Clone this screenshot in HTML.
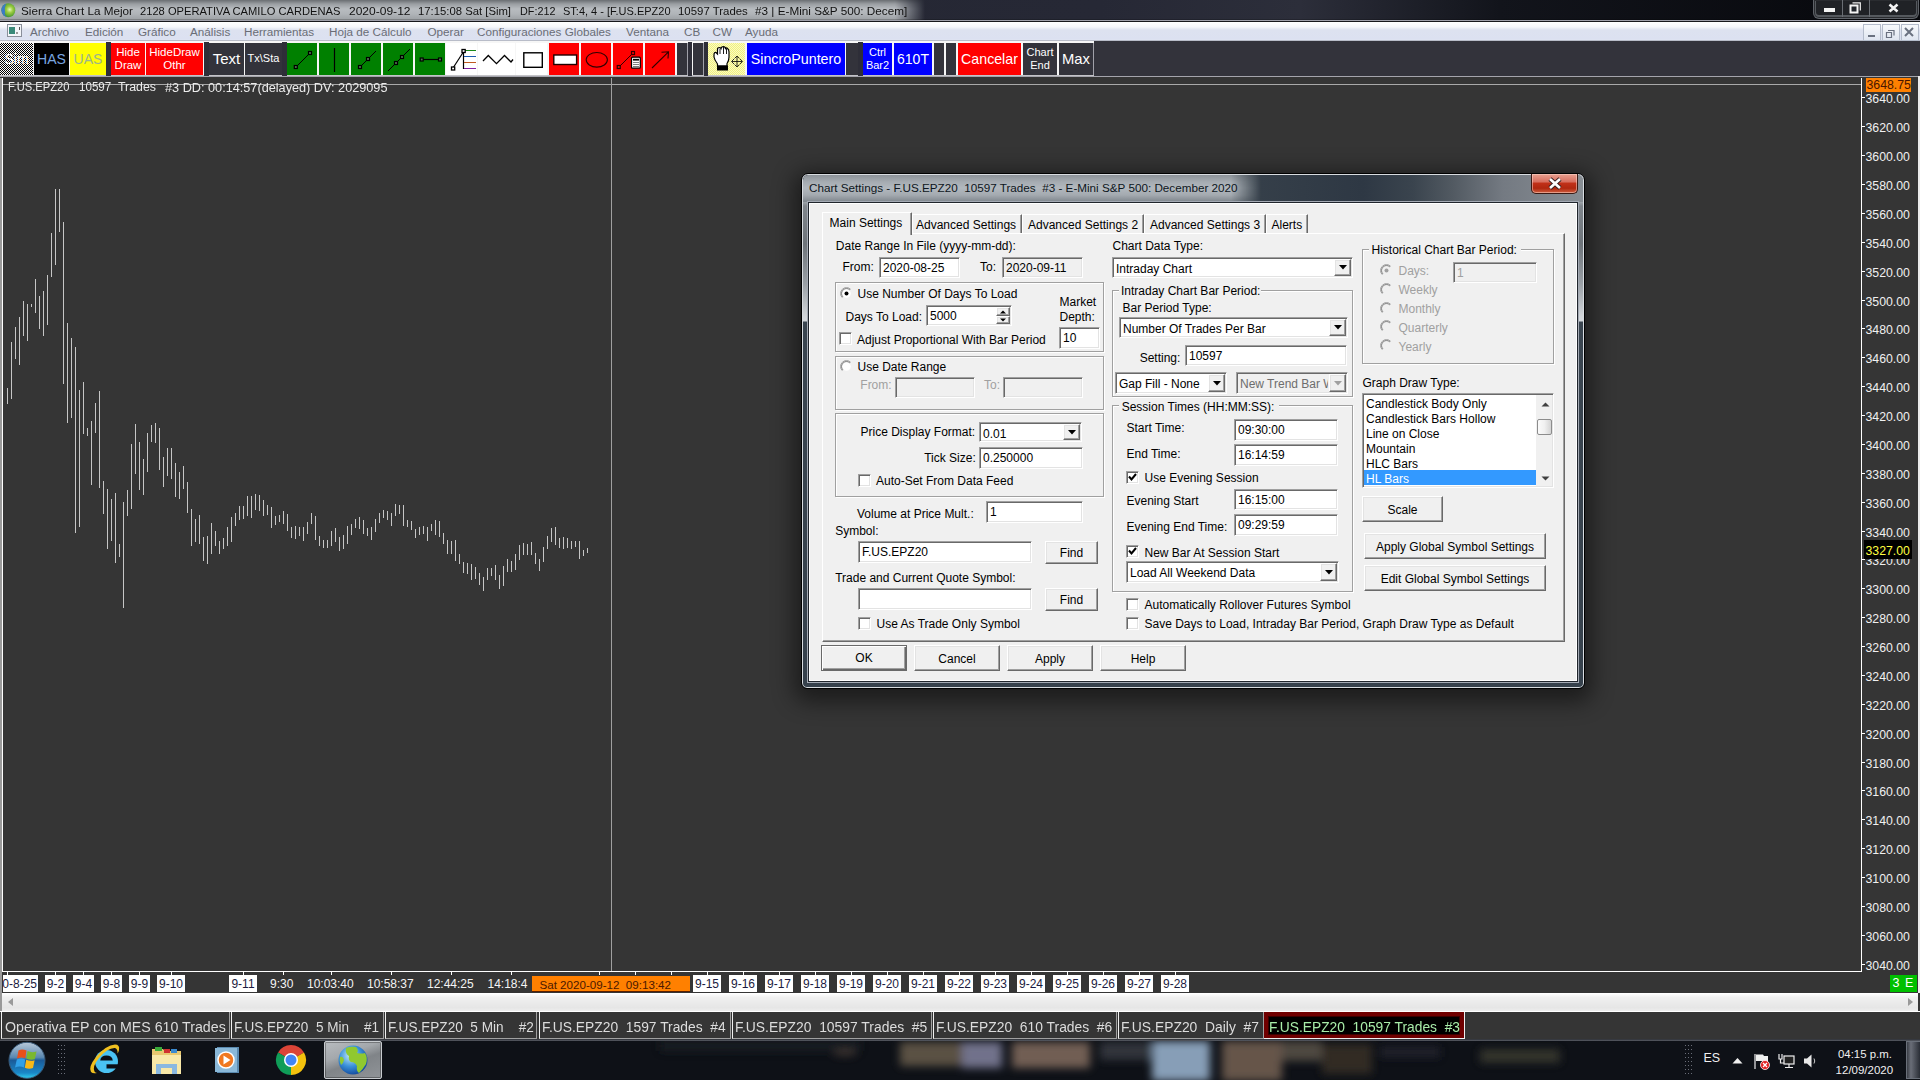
<!DOCTYPE html><html><head><meta charset="utf-8"><style>
*{margin:0;padding:0;box-sizing:border-box}
html,body{width:1920px;height:1080px;overflow:hidden;background:#353535;font-family:"Liberation Sans",sans-serif;font-size:12px}
.a{position:absolute;white-space:nowrap}
.t{line-height:1}
.btn{background:#f0f0f0;border:1px solid;border-color:#fff #696969 #696969 #fff;box-shadow:inset -1px -1px 0 #a0a0a0,inset 1px 1px 0 #e3e3e3;text-align:center;color:#000}
.ed{background:#fff;border:1px solid;border-color:#a0a0a0 #fff #fff #a0a0a0;box-shadow:inset 1px 1px 0 #696969,inset -1px -1px 0 #e3e3e3}
.grp{border:1px solid #a0a0a0;box-shadow:inset 1px 1px 0 #fff,1px 1px 0 #fff}
.tb{border:1px solid;border-color:#fff #a0a0a0 #a0a0a0 #fff;color:#fff;text-align:center;overflow:hidden}
</style></head><body>
<div class="a " style="left:0px;top:0px;width:1920px;height:21px;background:linear-gradient(90deg,#232530 0,#262835 1100px,#2c2e3a 1300px,#12141b 1500px,#06070b 1920px)"></div>
<div class="a " style="left:0px;top:0px;width:925px;height:20px;background:linear-gradient(#6a6e72 0,#9a9ea2 4px,#b8bcc0 9px,#b0b4b8 14px,#9ca0a4 20px);-webkit-mask-image:linear-gradient(90deg,#000 0,#000 895px,transparent 925px)"></div>
<div class="a " style="left:0px;top:19px;width:1920px;height:1px;background:rgba(0,0,0,0.2)"></div>
<div class="a " style="left:0px;top:20px;width:1920px;height:1px;background:#a0a0aa"></div>
<div class="a " style="left:0px;top:21px;width:1920px;height:1px;background:#18181c"></div>
<svg class="a" style="left:1px;top:3px" width="15" height="15" viewBox="0 0 15 15"><defs><radialGradient id="gl" cx="0.6" cy="0.45" r="0.65"><stop offset="0" stop-color="#e0f8c0"/><stop offset="0.35" stop-color="#9ccc40"/><stop offset="0.8" stop-color="#4a9a30"/><stop offset="1" stop-color="#2a70b8"/></radialGradient></defs><circle cx="7.3" cy="7.3" r="7" fill="url(#gl)"/><path d="M0.5 7 Q1 2 5 0.8 Q3 5 4 9 Q3 12 6 14.2 Q1 12.5 0.5 7Z" fill="#3a7ac8"/></svg>
<div class="a t" style="left:21px;top:5.3px;font-size:11.8px;line-height:13.6px;color:#111;transform-origin:0 0;transform:scaleX(0.9932);">Sierra Chart La Mejor</div>
<div class="a t" style="left:140px;top:5.3px;font-size:11.8px;line-height:13.6px;color:#111;transform-origin:0 0;transform:scaleX(0.9453);">2128 OPERATIVA CAMILO CARDENAS</div>
<div class="a t" style="left:349px;top:5.3px;font-size:11.8px;line-height:13.6px;color:#111;transform-origin:0 0;transform:scaleX(1.0192);">2020-09-12</div>
<div class="a t" style="left:418px;top:5.3px;font-size:11.8px;line-height:13.6px;color:#111;transform-origin:0 0;transform:scaleX(0.9582);">17:15:08 Sat [Sim]</div>
<div class="a t" style="left:519.5px;top:5.3px;font-size:11.8px;line-height:13.6px;color:#111;transform-origin:0 0;transform:scaleX(0.9177);">DF:212</div>
<div class="a t" style="left:562.5px;top:5.3px;font-size:11.8px;line-height:13.6px;color:#111;transform-origin:0 0;transform:scaleX(0.9316);">ST:4, 4 - [F.US.EPZ20</div>
<div class="a t" style="left:677.5px;top:5.3px;font-size:11.8px;line-height:13.6px;color:#111;transform-origin:0 0;transform:scaleX(0.9674);">10597 Trades</div>
<div class="a t" style="left:755px;top:5.3px;font-size:11.8px;line-height:13.6px;color:#111;transform-origin:0 0;transform:scaleX(0.9954);">#3 | E-Mini S&amp;P 500: Decem]</div>
<div class="a " style="left:1813px;top:0px;width:106px;height:19px;border:1px solid #5e6268;border-top:none;border-radius:0 0 6px 6px;background:#202226;box-shadow:inset 0 0 0 1px #2a2c30,inset 0 -1px 0 2px #55595e"></div>
<div class="a " style="left:1842px;top:0px;width:1px;height:17px;background:#6a6e74"></div>
<div class="a " style="left:1869px;top:0px;width:1px;height:17px;background:#6a6e74"></div>
<div class="a " style="left:1824px;top:8px;width:11px;height:4px;background:#f4f4f4"></div>
<svg class="a" style="left:1848px;top:2px" width="14" height="13" viewBox="0 0 14 13"><path d="M4.5 0.8 H12.3 V8.5" fill="none" stroke="#f0f0f0" stroke-width="1.2"/><rect x="2.5" y="3.5" width="7" height="7" fill="#20242a" stroke="#f4f4f4" stroke-width="2"/></svg>
<svg class="a" style="left:1888px;top:3px" width="11" height="10" viewBox="0 0 11 10"><path d="M1.5 1.5 L9.5 8.5 M9.5 1.5 L1.5 8.5" stroke="#f4f4f4" stroke-width="2.6"/></svg>
<div class="a " style="left:0px;top:22px;width:1920px;height:18px;background:linear-gradient(#ffffff 0,#f6f7fb 5px,#eceff6 6px,#dde2f0 8px,#dce1f1 17px,#e0e5f2 18px)"></div>
<div class="a " style="left:0px;top:40px;width:1920px;height:1px;background:#b8bcc8"></div>
<svg class="a" style="left:7px;top:24px" width="15" height="13" viewBox="0 0 15 13"><rect x="0.5" y="0.5" width="14" height="12" fill="#f4f6fa" stroke="#8a8f9a"/><rect x="2" y="3" width="6" height="7" fill="#3a8a7a"/><rect x="9" y="8" width="2" height="2" fill="#9a9a9a"/><rect x="12" y="3" width="1" height="3" fill="#555"/></svg>
<div class="a t" style="left:30px;top:25.4px;font-size:11.7px;line-height:13.5px;color:#6a6d76;">Archivo</div>
<div class="a t" style="left:85px;top:25.4px;font-size:11.7px;line-height:13.5px;color:#6a6d76;">Edición</div>
<div class="a t" style="left:138px;top:25.4px;font-size:11.7px;line-height:13.5px;color:#6a6d76;">Gráfico</div>
<div class="a t" style="left:190px;top:25.4px;font-size:11.7px;line-height:13.5px;color:#6a6d76;">Análisis</div>
<div class="a t" style="left:244px;top:25.4px;font-size:11.7px;line-height:13.5px;color:#6a6d76;">Herramientas</div>
<div class="a t" style="left:329px;top:25.4px;font-size:11.7px;line-height:13.5px;color:#6a6d76;">Hoja de Cálculo</div>
<div class="a t" style="left:427.5px;top:25.4px;font-size:11.7px;line-height:13.5px;color:#6a6d76;">Operar</div>
<div class="a t" style="left:477px;top:25.4px;font-size:11.7px;line-height:13.5px;color:#6a6d76;">Configuraciones Globales</div>
<div class="a t" style="left:626px;top:25.4px;font-size:11.7px;line-height:13.5px;color:#6a6d76;">Ventana</div>
<div class="a t" style="left:684px;top:25.4px;font-size:11.7px;line-height:13.5px;color:#6a6d76;">CB</div>
<div class="a t" style="left:712.5px;top:25.4px;font-size:11.7px;line-height:13.5px;color:#6a6d76;">CW</div>
<div class="a t" style="left:745px;top:25.4px;font-size:11.7px;line-height:13.5px;color:#6a6d76;">Ayuda</div>
<div class="a " style="left:1863px;top:24px;width:18px;height:17px;border:1px solid #b4bccb;background:linear-gradient(#f7f9fc,#dfe5f0)"></div>
<div class="a " style="left:1882px;top:24px;width:18px;height:17px;border:1px solid #b4bccb;background:linear-gradient(#f7f9fc,#dfe5f0)"></div>
<div class="a " style="left:1901px;top:24px;width:18px;height:17px;border:1px solid #b4bccb;background:linear-gradient(#f7f9fc,#dfe5f0)"></div>
<svg class="a" style="left:1863px;top:24px" width="56" height="17" viewBox="0 0 56 17"><rect x="5" y="11" width="7" height="2" fill="#6a7180"/><path d="M25 6.5h6v5M23.5 8.5h5v5h-5z" fill="none" stroke="#6a7180" stroke-width="1.2"/><path d="M42 4 L50 12 M50 4 L42 12" stroke="#6a7180" stroke-width="2"/></svg>
<div class="a " style="left:0px;top:41px;width:1920px;height:36px;background:#33333b"></div>
<div class="a " style="left:0px;top:41px;width:1094px;height:35px;background:#f6f6f6"></div>
<div class="a " style="left:0px;top:75px;width:1094px;height:1px;background:#c4c4c8"></div>
<div class="a " style="left:0px;top:76px;width:1920px;height:1px;background:#a4a4ac"></div>
<div class="a " style="left:0px;top:43px;width:33px;height:32px;background:repeating-conic-gradient(#000 0 25%,#fff 0 50%) 0 0/2px 2px;overflow:hidden;"><div style="position:absolute;left:0;right:0;top:9px;font-size:14px;line-height:14px;color:#fff;text-align:center;">Sim</div></div>
<div class="a " style="left:34px;top:43px;width:35px;height:32px;background:#000;overflow:hidden;"><div style="position:absolute;left:0;right:0;top:9px;font-size:14px;line-height:14px;color:#7aa7e0;text-align:center;">HAS</div></div>
<div class="a " style="left:70px;top:43px;width:36px;height:32px;background:#ffff00;overflow:hidden;"><div style="position:absolute;left:0;right:0;top:9px;font-size:14px;line-height:14px;color:#9cb48c;text-align:center;">UAS</div></div>
<div class="a " style="left:106px;top:42px;width:5px;height:34px;background:#2e2e38"></div>
<div class="a " style="left:111px;top:43px;width:34px;height:32px;background:#ff0000;overflow:hidden;"><div style="position:absolute;left:0;right:0;top:4px;font-size:11.5px;line-height:11.5px;color:#fff;text-align:center;">Hide</div><div style="position:absolute;left:0;right:0;top:17px;font-size:11.5px;line-height:11.5px;color:#fff;text-align:center;">Draw</div></div>
<div class="a " style="left:146px;top:43px;width:57px;height:32px;background:#ff0000;overflow:hidden;"><div style="position:absolute;left:0;right:0;top:4px;font-size:11.5px;line-height:11.5px;color:#fff;text-align:center;">HideDraw</div><div style="position:absolute;left:0;right:0;top:17px;font-size:11.5px;line-height:11.5px;color:#fff;text-align:center;">Othr</div></div>
<div class="a " style="left:204px;top:42px;width:5px;height:34px;background:#2e2e38"></div>
<div class="a " style="left:209px;top:43px;width:35px;height:32px;background:#33333b;overflow:hidden;"><div style="position:absolute;left:0;right:0;top:8px;font-size:15px;line-height:15px;color:#fff;text-align:center;">Text</div></div>
<div class="a " style="left:245px;top:43px;width:37px;height:32px;background:#33333b;overflow:hidden;"><div style="position:absolute;left:0;right:0;top:10px;font-size:11px;line-height:11px;color:#fff;text-align:center;">Tx\Sta</div></div>
<div class="a " style="left:282px;top:42px;width:5px;height:34px;background:#2e2e38"></div>
<div class="a " style="left:287px;top:43px;width:30px;height:32px;background:#008000;overflow:hidden;"></div>
<div class="a " style="left:319px;top:43px;width:30px;height:32px;background:#008000;overflow:hidden;"></div>
<div class="a " style="left:351px;top:43px;width:30px;height:32px;background:#008000;overflow:hidden;"></div>
<div class="a " style="left:383px;top:43px;width:30px;height:32px;background:#008000;overflow:hidden;"></div>
<div class="a " style="left:415px;top:43px;width:30px;height:32px;background:#008000;overflow:hidden;"></div>
<div class="a " style="left:446px;top:43px;width:31px;height:32px;background:#fff;overflow:hidden;"></div>
<div class="a " style="left:478px;top:43px;width:37px;height:32px;background:#fff;overflow:hidden;"></div>
<div class="a " style="left:516px;top:43px;width:31px;height:32px;background:#fff;overflow:hidden;"></div>
<div class="a " style="left:549px;top:43px;width:30px;height:32px;background:#ff0000;overflow:hidden;"></div>
<div class="a " style="left:581px;top:43px;width:30px;height:32px;background:#ff0000;overflow:hidden;"></div>
<div class="a " style="left:613px;top:43px;width:30px;height:32px;background:#ff0000;overflow:hidden;"></div>
<div class="a " style="left:645px;top:43px;width:30px;height:32px;background:#ff0000;overflow:hidden;"></div>
<div class="a " style="left:677px;top:43px;width:10px;height:32px;background:#33333b;overflow:hidden;"></div>
<div class="a " style="left:687px;top:43px;width:1px;height:32px;background:#a0a0a8"></div>
<div class="a " style="left:688px;top:42px;width:4px;height:34px;background:#2e2e38"></div>
<div class="a " style="left:693px;top:43px;width:10px;height:32px;background:#33333b;overflow:hidden;"></div>
<div class="a " style="left:703px;top:43px;width:1px;height:32px;background:#a0a0a8"></div>
<div class="a " style="left:704px;top:42px;width:4px;height:34px;background:#2e2e38"></div>
<svg class="a" style="left:0;top:0" width="720" height="78"><path d="M296 67 L310 53" stroke="#000" stroke-width="1"/><rect x="294.3" y="65.5" width="3" height="3" fill="#507850" stroke="#000" stroke-width="1.2"/><rect x="308.5" y="51.5" width="3" height="3" fill="#507850" stroke="#000" stroke-width="1.2"/><path d="M334.5 48 V72" stroke="#000" stroke-width="1.2"/><path d="M360 67 L376 51" stroke="#000" stroke-width="1"/><rect x="358.5" y="65.5" width="3" height="3" fill="#507850" stroke="#000" stroke-width="1.2"/><rect x="366.5" y="57.5" width="3" height="3" fill="#507850" stroke="#000" stroke-width="1.2"/><path d="M388 71 L410 49" stroke="#000" stroke-width="1"/><rect x="394.5" y="61.5" width="3" height="3" fill="#507850" stroke="#000" stroke-width="1.2"/><rect x="400.5" y="55.5" width="3" height="3" fill="#507850" stroke="#000" stroke-width="1.2"/><path d="M422 59.5 H440" stroke="#000" stroke-width="1.2"/><rect x="420.2" y="58.0" width="3" height="3" fill="#507850" stroke="#000" stroke-width="1.2"/><rect x="438.5" y="58.0" width="3" height="3" fill="#507850" stroke="#000" stroke-width="1.2"/><path d="M453 68 L464 51" stroke="#000" stroke-width="1.2"/><path d="M463.5 51 V69" stroke="#000" stroke-width="1.2"/><path d="M464 50.5 H476" stroke="#1a8a1a"/><path d="M464 56.5 H476" stroke="#1a5ab0"/><path d="M464 62.5 H476" stroke="#c05a20"/><path d="M464 68.5 H476" stroke="#8020a0"/><rect x="462" y="49.5" width="3.2" height="3" fill="#fff" stroke="#000" stroke-width="1.3"/><rect x="451.5" y="67" width="3.2" height="3" fill="#fff" stroke="#000" stroke-width="1.3"/><path d="M483 61 L488.3 55.5 L496.5 63.7 L504.5 55.5 L511 62 L513 59.5" fill="none" stroke="#000" stroke-width="1.3"/><rect x="523.8" y="52.8" width="18.5" height="14.5" fill="#fff" stroke="#000" stroke-width="1.4"/><rect x="553.8" y="55" width="22.8" height="9.5" fill="#fff" stroke="#200000" stroke-width="1.4"/><ellipse cx="596.8" cy="59.8" rx="10.6" ry="7.3" fill="none" stroke="#300000" stroke-width="1.1"/><path d="M619 67 L633 53" stroke="#300000" stroke-width="1"/><rect x="617.25" y="65.5" width="3" height="3" fill="#ff0000" stroke="#300000" stroke-width="1.2"/><rect x="631.5" y="51.5" width="3" height="3" fill="#ff0000" stroke="#300000" stroke-width="1.2"/><rect x="631.5" y="57.2" width="8.8" height="11" rx="1" fill="#fff" stroke="#000" stroke-width="1.2"/><rect x="633" y="58.8" width="6" height="1.8" fill="#000"/><path d="M633.5 62.5h1M635.5 62.5h1M637.5 62.5h1M633.5 64.5h1M635.5 64.5h1M637.5 64.5h1M633.5 66.5h1M635.5 66.5h1M637.5 66.5h1" stroke="#000"/><path d="M652 68 L668.5 51.8 M661.5 52.2 L668.5 51.8 L668 58.5" fill="none" stroke="#300000" stroke-width="1.1"/></svg>
<div class="a " style="left:708px;top:43px;width:37px;height:32px;background:repeating-conic-gradient(#f0f080 0 25%,#fbfbc0 0 50%) 0 0/2px 2px;overflow:hidden;"><svg width="37" height="32" style="position:absolute;left:0;top:0"><path d="M6 12 Q6 9 8 9.5 L9.5 11 V6.5 Q9.5 4.5 11.5 4.5 Q12.5 4.5 13 5.5 Q13.5 3.5 15.5 3.5 Q17 3.5 17.5 5.5 Q18.5 4.5 19.5 5.5 Q21 6.5 21 9 V14 Q21 18 19 20.5 V23 H9.5 V21 Q6.5 17 6 14 Z" fill="#fff" stroke="#000" stroke-width="1.2"/><path d="M12 5.5V11M15.5 4V11M18.5 6V11" stroke="#000" stroke-width="0.9"/><rect x="9" y="22.5" width="11" height="5" fill="#000"/><path d="M24 18.5 H34 M29 13.5 V23.5 M26.5 15.5 L29 13 L31.5 15.5 M26.5 21.5 L29 24 L31.5 21.5 M26 16 L23.5 18.5 L26 21 M32 16 L34.5 18.5 L32 21" fill="none" stroke="#000" stroke-width="0.8"/></svg></div>
<div class="a " style="left:747px;top:43px;width:98px;height:32px;background:#0000ff;overflow:hidden;"><div style="position:absolute;left:0;right:0;top:9px;font-size:14.3px;line-height:14.3px;color:#fff;text-align:center;">SincroPuntero</div></div>
<div class="a " style="left:846px;top:43px;width:12px;height:32px;background:#33333b;overflow:hidden;"></div>
<div class="a " style="left:858px;top:42px;width:5px;height:34px;background:#2e2e38"></div>
<div class="a " style="left:863px;top:43px;width:29px;height:32px;background:#0000ff;overflow:hidden;"><div style="position:absolute;left:0;right:0;top:4px;font-size:11px;line-height:11px;color:#fff;text-align:center;">Ctrl</div><div style="position:absolute;left:0;right:0;top:17px;font-size:11px;line-height:11px;color:#fff;text-align:center;">Bar2</div></div>
<div class="a " style="left:894px;top:43px;width:38px;height:32px;background:#0000ff;overflow:hidden;"><div style="position:absolute;left:0;right:0;top:9px;font-size:14px;line-height:14px;color:#fff;text-align:center;">610T</div></div>
<div class="a " style="left:934px;top:43px;width:10px;height:32px;background:#33333b;overflow:hidden;"></div>
<div class="a " style="left:946px;top:43px;width:10px;height:32px;background:#33333b;overflow:hidden;"></div>
<div class="a " style="left:958px;top:43px;width:63px;height:32px;background:#ff0000;overflow:hidden;"><div style="position:absolute;left:0;right:0;top:9px;font-size:14.2px;line-height:14.2px;color:#fff;text-align:center;">Cancelar</div></div>
<div class="a " style="left:1023px;top:43px;width:34px;height:32px;background:#33333b;overflow:hidden;"><div style="position:absolute;left:0;right:0;top:4px;font-size:11px;line-height:11px;color:#fff;text-align:center;">Chart</div><div style="position:absolute;left:0;right:0;top:17px;font-size:11px;line-height:11px;color:#fff;text-align:center;">End</div></div>
<div class="a " style="left:1059px;top:43px;width:34px;height:32px;background:#33333b;overflow:hidden;"><div style="position:absolute;left:0;right:0;top:9px;font-size:14.8px;line-height:14.8px;color:#fff;text-align:center;">Max</div></div>
<div class="a " style="left:1093px;top:43px;width:1px;height:32px;background:#a0a0a8"></div>
<div class="a " style="left:0px;top:77px;width:1920px;height:894px;background:#353535"></div>
<div class="a " style="left:0px;top:78px;width:2px;height:933px;background:#9a9a9a"></div>
<div class="a " style="left:1918px;top:76px;width:2px;height:917px;background:#ececec"></div>
<div class="a " style="left:2px;top:78px;width:1px;height:894px;background:#ffffff"></div>
<div class="a " style="left:3px;top:84px;width:1858px;height:1px;background:#a9a9a9"></div>
<div class="a " style="left:611px;top:78px;width:1px;height:893px;background:#a0a0a0"></div>
<div class="a t" style="left:7.5px;top:81.1px;font-size:12px;line-height:13.8px;color:#ececec;transform-origin:0 0;transform:scaleX(0.9315);">F.US.EPZ20</div>
<div class="a t" style="left:78.75px;top:81.1px;font-size:12px;line-height:13.8px;color:#ececec;transform-origin:0 0;transform:scaleX(0.9665);">10597</div>
<div class="a t" style="left:118px;top:81.1px;font-size:12px;line-height:13.8px;color:#ececec;transform-origin:0 0;transform:scaleX(1.0297);">Trades</div>
<div class="a t" style="left:165px;top:80.8px;font-size:12.4px;line-height:14.3px;color:#ececec;transform-origin:0 0;transform:scaleX(1.0243);">#3 DD: 00:14:57(delayed) DV: 2029095</div>
<svg class="a" style="left:0;top:0" width="620" height="620"><path d="M7.5 388V404 M11.5 342V399 M15.5 327V359 M19.5 317V365 M23.5 301V336 M27.5 304V341 M31.5 304V307 M35.5 279V313 M39.5 296V329 M43.5 291V336 M47.5 275V325 M51.5 233V277 M55.5 189V265 M59.5 189V232 M63.5 222V384 M67.5 323V423 M71.5 338V418 M75.5 347V533 M79.5 390V527 M83.5 382V434 M87.5 428V436 M91.5 421V485 M95.5 403V433 M99.5 391V488 M103.5 481V514 M107.5 489V549 M111.5 499V541 M115.5 493V563 M119.5 544V557 M123.5 502V608 M127.5 490V516 M131.5 444V509 M135.5 424V474 M139.5 442V490 M143.5 459V495 M147.5 433V472 M151.5 425V442 M155.5 423V443 M159.5 428V470 M163.5 457V487 M167.5 448V476 M171.5 448V479 M175.5 463V497 M179.5 472V499 M183.5 466V489 M187.5 482V513 M191.5 509V546 M195.5 519V542 M199.5 515V544 M203.5 537V561 M207.5 536V564 M211.5 523V554 M215.5 531V546 M219.5 541V554 M223.5 538V549 M227.5 527V546 M231.5 517V542 M235.5 513V526 M239.5 506V520 M243.5 506V519 M247.5 496V516 M251.5 496V518 M255.5 494V510 M259.5 495V511 M263.5 500V516 M267.5 505V515 M271.5 507V528 M275.5 516V525 M279.5 515V522 M283.5 511V524 M287.5 514V531 M291.5 527V538 M295.5 526V539 M299.5 527V536 M303.5 527V541 M307.5 522V534 M311.5 513V524 M315.5 516V540 M319.5 536V546 M323.5 540V548 M327.5 540V548 M331.5 531V546 M335.5 528V542 M339.5 537V551 M343.5 535V549 M347.5 526V544 M351.5 524V535 M355.5 519V528 M359.5 517V529 M363.5 520V534 M367.5 528V536 M371.5 527V540 M375.5 519V532 M379.5 513V523 M383.5 510V518 M387.5 511V520 M391.5 513V526 M395.5 504V516 M399.5 505V514 M403.5 505V526 M407.5 520V527 M411.5 521V530 M415.5 529V538 M419.5 527V535 M423.5 526V534 M427.5 527V541 M431.5 524V531 M435.5 520V535 M439.5 521V537 M443.5 533V544 M447.5 540V554 M451.5 541V554 M455.5 540V561 M459.5 554V564 M463.5 562V573 M467.5 563V574 M471.5 564V580 M475.5 567V579 M479.5 573V585 M483.5 577V591 M487.5 568V580 M491.5 568V576 M495.5 565V580 M499.5 575V589 M503.5 566V586 M507.5 559V572 M511.5 561V572 M515.5 554V570 M519.5 545V560 M523.5 543V555 M527.5 544V555 M531.5 542V555 M535.5 553V564 M539.5 559V571 M543.5 547V562 M547.5 536V549 M551.5 528V542 M555.5 527V545 M559.5 538V548 M563.5 537V549 M567.5 538V548 M571.5 541V549 M575.5 541V547 M579.5 541V559 M583.5 550V556 M587.5 548V553" stroke="#c6c6c6" stroke-width="1"/></svg>
<div class="a " style="left:1861px;top:78px;width:1px;height:894px;background:#ffffff"></div>
<div class="a " style="left:1862px;top:97px;width:3px;height:1px;background:#fff"></div>
<div class="a t" style="left:1865.5px;top:92.4px;font-size:12.3px;line-height:14.1px;color:#f0f0f0;">3640.00</div>
<div class="a " style="left:1862px;top:126px;width:3px;height:1px;background:#fff"></div>
<div class="a t" style="left:1865.5px;top:121.4px;font-size:12.3px;line-height:14.1px;color:#f0f0f0;">3620.00</div>
<div class="a " style="left:1862px;top:155px;width:3px;height:1px;background:#fff"></div>
<div class="a t" style="left:1865.5px;top:150.4px;font-size:12.3px;line-height:14.1px;color:#f0f0f0;">3600.00</div>
<div class="a " style="left:1862px;top:184px;width:3px;height:1px;background:#fff"></div>
<div class="a t" style="left:1865.5px;top:179.4px;font-size:12.3px;line-height:14.1px;color:#f0f0f0;">3580.00</div>
<div class="a " style="left:1862px;top:213px;width:3px;height:1px;background:#fff"></div>
<div class="a t" style="left:1865.5px;top:208.4px;font-size:12.3px;line-height:14.1px;color:#f0f0f0;">3560.00</div>
<div class="a " style="left:1862px;top:242px;width:3px;height:1px;background:#fff"></div>
<div class="a t" style="left:1865.5px;top:237.4px;font-size:12.3px;line-height:14.1px;color:#f0f0f0;">3540.00</div>
<div class="a " style="left:1862px;top:271px;width:3px;height:1px;background:#fff"></div>
<div class="a t" style="left:1865.5px;top:266.4px;font-size:12.3px;line-height:14.1px;color:#f0f0f0;">3520.00</div>
<div class="a " style="left:1862px;top:300px;width:3px;height:1px;background:#fff"></div>
<div class="a t" style="left:1865.5px;top:295.4px;font-size:12.3px;line-height:14.1px;color:#f0f0f0;">3500.00</div>
<div class="a " style="left:1862px;top:328px;width:3px;height:1px;background:#fff"></div>
<div class="a t" style="left:1865.5px;top:323.4px;font-size:12.3px;line-height:14.1px;color:#f0f0f0;">3480.00</div>
<div class="a " style="left:1862px;top:357px;width:3px;height:1px;background:#fff"></div>
<div class="a t" style="left:1865.5px;top:352.4px;font-size:12.3px;line-height:14.1px;color:#f0f0f0;">3460.00</div>
<div class="a " style="left:1862px;top:386px;width:3px;height:1px;background:#fff"></div>
<div class="a t" style="left:1865.5px;top:381.4px;font-size:12.3px;line-height:14.1px;color:#f0f0f0;">3440.00</div>
<div class="a " style="left:1862px;top:415px;width:3px;height:1px;background:#fff"></div>
<div class="a t" style="left:1865.5px;top:410.4px;font-size:12.3px;line-height:14.1px;color:#f0f0f0;">3420.00</div>
<div class="a " style="left:1862px;top:444px;width:3px;height:1px;background:#fff"></div>
<div class="a t" style="left:1865.5px;top:439.4px;font-size:12.3px;line-height:14.1px;color:#f0f0f0;">3400.00</div>
<div class="a " style="left:1862px;top:473px;width:3px;height:1px;background:#fff"></div>
<div class="a t" style="left:1865.5px;top:468.4px;font-size:12.3px;line-height:14.1px;color:#f0f0f0;">3380.00</div>
<div class="a " style="left:1862px;top:502px;width:3px;height:1px;background:#fff"></div>
<div class="a t" style="left:1865.5px;top:497.4px;font-size:12.3px;line-height:14.1px;color:#f0f0f0;">3360.00</div>
<div class="a " style="left:1862px;top:531px;width:3px;height:1px;background:#fff"></div>
<div class="a t" style="left:1865.5px;top:526.4px;font-size:12.3px;line-height:14.1px;color:#f0f0f0;">3340.00</div>
<div class="a " style="left:1862px;top:559px;width:3px;height:1px;background:#fff"></div>
<div class="a " style="left:1862px;top:588px;width:3px;height:1px;background:#fff"></div>
<div class="a t" style="left:1865.5px;top:583.4px;font-size:12.3px;line-height:14.1px;color:#f0f0f0;">3300.00</div>
<div class="a " style="left:1862px;top:617px;width:3px;height:1px;background:#fff"></div>
<div class="a t" style="left:1865.5px;top:612.4px;font-size:12.3px;line-height:14.1px;color:#f0f0f0;">3280.00</div>
<div class="a " style="left:1862px;top:646px;width:3px;height:1px;background:#fff"></div>
<div class="a t" style="left:1865.5px;top:641.4px;font-size:12.3px;line-height:14.1px;color:#f0f0f0;">3260.00</div>
<div class="a " style="left:1862px;top:675px;width:3px;height:1px;background:#fff"></div>
<div class="a t" style="left:1865.5px;top:670.4px;font-size:12.3px;line-height:14.1px;color:#f0f0f0;">3240.00</div>
<div class="a " style="left:1862px;top:704px;width:3px;height:1px;background:#fff"></div>
<div class="a t" style="left:1865.5px;top:699.4px;font-size:12.3px;line-height:14.1px;color:#f0f0f0;">3220.00</div>
<div class="a " style="left:1862px;top:733px;width:3px;height:1px;background:#fff"></div>
<div class="a t" style="left:1865.5px;top:728.4px;font-size:12.3px;line-height:14.1px;color:#f0f0f0;">3200.00</div>
<div class="a " style="left:1862px;top:762px;width:3px;height:1px;background:#fff"></div>
<div class="a t" style="left:1865.5px;top:757.4px;font-size:12.3px;line-height:14.1px;color:#f0f0f0;">3180.00</div>
<div class="a " style="left:1862px;top:790px;width:3px;height:1px;background:#fff"></div>
<div class="a t" style="left:1865.5px;top:785.4px;font-size:12.3px;line-height:14.1px;color:#f0f0f0;">3160.00</div>
<div class="a " style="left:1862px;top:819px;width:3px;height:1px;background:#fff"></div>
<div class="a t" style="left:1865.5px;top:814.4px;font-size:12.3px;line-height:14.1px;color:#f0f0f0;">3140.00</div>
<div class="a " style="left:1862px;top:848px;width:3px;height:1px;background:#fff"></div>
<div class="a t" style="left:1865.5px;top:843.4px;font-size:12.3px;line-height:14.1px;color:#f0f0f0;">3120.00</div>
<div class="a " style="left:1862px;top:877px;width:3px;height:1px;background:#fff"></div>
<div class="a t" style="left:1865.5px;top:872.4px;font-size:12.3px;line-height:14.1px;color:#f0f0f0;">3100.00</div>
<div class="a " style="left:1862px;top:906px;width:3px;height:1px;background:#fff"></div>
<div class="a t" style="left:1865.5px;top:901.4px;font-size:12.3px;line-height:14.1px;color:#f0f0f0;">3080.00</div>
<div class="a " style="left:1862px;top:935px;width:3px;height:1px;background:#fff"></div>
<div class="a t" style="left:1865.5px;top:930.4px;font-size:12.3px;line-height:14.1px;color:#f0f0f0;">3060.00</div>
<div class="a " style="left:1862px;top:964px;width:3px;height:1px;background:#fff"></div>
<div class="a t" style="left:1865.5px;top:959.4px;font-size:12.3px;line-height:14.1px;color:#f0f0f0;">3040.00</div>
<div class="a t" style="left:1865.5px;top:554.4px;font-size:12.3px;line-height:14.1px;color:#f0f0f0;">3320.00</div>
<div class="a " style="left:1864px;top:540px;width:48px;height:19px;background:#000"></div>
<div class="a t" style="left:1865.5px;top:543.9px;font-size:12.3px;line-height:14.1px;color:#ffff40;">3327.00</div>
<div class="a " style="left:1866px;top:78px;width:45px;height:14px;background:#ff8000"></div>
<div class="a t" style="left:1866.5px;top:77.9px;font-size:12.3px;line-height:14.1px;color:#4a1500;">3648.75</div>
<div class="a " style="left:2px;top:971px;width:1859px;height:1px;background:#ffffff"></div>
<div class="a " style="left:7px;top:972px;width:1px;height:3px;background:#fff"></div>
<div class="a " style="left:55px;top:972px;width:1px;height:3px;background:#fff"></div>
<div class="a " style="left:83px;top:972px;width:1px;height:3px;background:#fff"></div>
<div class="a " style="left:111px;top:972px;width:1px;height:3px;background:#fff"></div>
<div class="a " style="left:139px;top:972px;width:1px;height:3px;background:#fff"></div>
<div class="a " style="left:171px;top:972px;width:1px;height:3px;background:#fff"></div>
<div class="a " style="left:243px;top:972px;width:1px;height:3px;background:#fff"></div>
<div class="a " style="left:283px;top:972px;width:1px;height:3px;background:#fff"></div>
<div class="a " style="left:331px;top:972px;width:1px;height:3px;background:#fff"></div>
<div class="a " style="left:391px;top:972px;width:1px;height:3px;background:#fff"></div>
<div class="a " style="left:451px;top:972px;width:1px;height:3px;background:#fff"></div>
<div class="a " style="left:511px;top:972px;width:1px;height:3px;background:#fff"></div>
<div class="a " style="left:599px;top:972px;width:1px;height:3px;background:#fff"></div>
<div class="a " style="left:635px;top:972px;width:1px;height:3px;background:#fff"></div>
<div class="a " style="left:671px;top:972px;width:1px;height:3px;background:#fff"></div>
<div class="a " style="left:707px;top:972px;width:1px;height:3px;background:#fff"></div>
<div class="a " style="left:743px;top:972px;width:1px;height:3px;background:#fff"></div>
<div class="a " style="left:779px;top:972px;width:1px;height:3px;background:#fff"></div>
<div class="a " style="left:815px;top:972px;width:1px;height:3px;background:#fff"></div>
<div class="a " style="left:851px;top:972px;width:1px;height:3px;background:#fff"></div>
<div class="a " style="left:887px;top:972px;width:1px;height:3px;background:#fff"></div>
<div class="a " style="left:923px;top:972px;width:1px;height:3px;background:#fff"></div>
<div class="a " style="left:959px;top:972px;width:1px;height:3px;background:#fff"></div>
<div class="a " style="left:995px;top:972px;width:1px;height:3px;background:#fff"></div>
<div class="a " style="left:1031px;top:972px;width:1px;height:3px;background:#fff"></div>
<div class="a " style="left:1067px;top:972px;width:1px;height:3px;background:#fff"></div>
<div class="a " style="left:1103px;top:972px;width:1px;height:3px;background:#fff"></div>
<div class="a " style="left:1139px;top:972px;width:1px;height:3px;background:#fff"></div>
<div class="a " style="left:1175px;top:972px;width:1px;height:3px;background:#fff"></div>
<div class="a " style="left:3px;top:975px;width:35px;height:17px;background:#fff;overflow:hidden"><div style="position:absolute;right:1px;top:3px;font-size:12px;line-height:13px;color:#1a1a40">20-8-25</div></div>
<div class="a " style="left:45px;top:975px;width:21px;height:17px;background:#fff;overflow:hidden;text-align:center"><div style="position:absolute;left:0;right:0;top:3px;font-size:12px;line-height:13px;color:#1a1a40">9-2</div></div>
<div class="a " style="left:73px;top:975px;width:21px;height:17px;background:#fff;overflow:hidden;text-align:center"><div style="position:absolute;left:0;right:0;top:3px;font-size:12px;line-height:13px;color:#1a1a40">9-4</div></div>
<div class="a " style="left:101px;top:975px;width:21px;height:17px;background:#fff;overflow:hidden;text-align:center"><div style="position:absolute;left:0;right:0;top:3px;font-size:12px;line-height:13px;color:#1a1a40">9-8</div></div>
<div class="a " style="left:129px;top:975px;width:21px;height:17px;background:#fff;overflow:hidden;text-align:center"><div style="position:absolute;left:0;right:0;top:3px;font-size:12px;line-height:13px;color:#1a1a40">9-9</div></div>
<div class="a " style="left:157px;top:975px;width:28px;height:17px;background:#fff;overflow:hidden;text-align:center"><div style="position:absolute;left:0;right:0;top:3px;font-size:12px;line-height:13px;color:#1a1a40">9-10</div></div>
<div class="a " style="left:229px;top:975px;width:28px;height:17px;background:#fff;overflow:hidden;text-align:center"><div style="position:absolute;left:0;right:0;top:3px;font-size:12px;line-height:13px;color:#1a1a40">9-11</div></div>
<div class="a t" style="left:270px;top:978.1px;font-size:12px;line-height:13.8px;color:#f4f4f4;">9:30</div>
<div class="a t" style="left:307px;top:978.1px;font-size:12px;line-height:13.8px;color:#f4f4f4;">10:03:40</div>
<div class="a t" style="left:367px;top:978.1px;font-size:12px;line-height:13.8px;color:#f4f4f4;">10:58:37</div>
<div class="a t" style="left:427px;top:978.1px;font-size:12px;line-height:13.8px;color:#f4f4f4;">12:44:25</div>
<div class="a t" style="left:487.5px;top:978.1px;font-size:12px;line-height:13.8px;color:#f4f4f4;">14:18:4</div>
<div class="a " style="left:532px;top:976px;width:158px;height:16px;background:#ff8000;border-bottom:1px solid #5a2000"></div>
<div class="a t" style="left:539.5px;top:977.5px;font-size:11.6px;line-height:13.3px;color:#4a1800;">Sat 2020-09-12&nbsp; 09:13:42</div>
<div class="a " style="left:693px;top:975px;width:28px;height:17px;background:#fff;overflow:hidden;text-align:center"><div style="position:absolute;left:0;right:0;top:3px;font-size:12px;line-height:13px;color:#1a1a40">9-15</div></div>
<div class="a " style="left:729px;top:975px;width:28px;height:17px;background:#fff;overflow:hidden;text-align:center"><div style="position:absolute;left:0;right:0;top:3px;font-size:12px;line-height:13px;color:#1a1a40">9-16</div></div>
<div class="a " style="left:765px;top:975px;width:28px;height:17px;background:#fff;overflow:hidden;text-align:center"><div style="position:absolute;left:0;right:0;top:3px;font-size:12px;line-height:13px;color:#1a1a40">9-17</div></div>
<div class="a " style="left:801px;top:975px;width:28px;height:17px;background:#fff;overflow:hidden;text-align:center"><div style="position:absolute;left:0;right:0;top:3px;font-size:12px;line-height:13px;color:#1a1a40">9-18</div></div>
<div class="a " style="left:837px;top:975px;width:28px;height:17px;background:#fff;overflow:hidden;text-align:center"><div style="position:absolute;left:0;right:0;top:3px;font-size:12px;line-height:13px;color:#1a1a40">9-19</div></div>
<div class="a " style="left:873px;top:975px;width:28px;height:17px;background:#fff;overflow:hidden;text-align:center"><div style="position:absolute;left:0;right:0;top:3px;font-size:12px;line-height:13px;color:#1a1a40">9-20</div></div>
<div class="a " style="left:909px;top:975px;width:28px;height:17px;background:#fff;overflow:hidden;text-align:center"><div style="position:absolute;left:0;right:0;top:3px;font-size:12px;line-height:13px;color:#1a1a40">9-21</div></div>
<div class="a " style="left:945px;top:975px;width:28px;height:17px;background:#fff;overflow:hidden;text-align:center"><div style="position:absolute;left:0;right:0;top:3px;font-size:12px;line-height:13px;color:#1a1a40">9-22</div></div>
<div class="a " style="left:981px;top:975px;width:28px;height:17px;background:#fff;overflow:hidden;text-align:center"><div style="position:absolute;left:0;right:0;top:3px;font-size:12px;line-height:13px;color:#1a1a40">9-23</div></div>
<div class="a " style="left:1017px;top:975px;width:28px;height:17px;background:#fff;overflow:hidden;text-align:center"><div style="position:absolute;left:0;right:0;top:3px;font-size:12px;line-height:13px;color:#1a1a40">9-24</div></div>
<div class="a " style="left:1053px;top:975px;width:28px;height:17px;background:#fff;overflow:hidden;text-align:center"><div style="position:absolute;left:0;right:0;top:3px;font-size:12px;line-height:13px;color:#1a1a40">9-25</div></div>
<div class="a " style="left:1089px;top:975px;width:28px;height:17px;background:#fff;overflow:hidden;text-align:center"><div style="position:absolute;left:0;right:0;top:3px;font-size:12px;line-height:13px;color:#1a1a40">9-26</div></div>
<div class="a " style="left:1125px;top:975px;width:28px;height:17px;background:#fff;overflow:hidden;text-align:center"><div style="position:absolute;left:0;right:0;top:3px;font-size:12px;line-height:13px;color:#1a1a40">9-27</div></div>
<div class="a " style="left:1161px;top:975px;width:28px;height:17px;background:#fff;overflow:hidden;text-align:center"><div style="position:absolute;left:0;right:0;top:3px;font-size:12px;line-height:13px;color:#1a1a40">9-28</div></div>
<div class="a " style="left:1890px;top:975px;width:27px;height:17px;background:#00c000"><div style="position:absolute;left:0;right:0;top:2px;text-align:center;font-size:12.5px;line-height:13px;color:#fff;letter-spacing:1px">3 E</div></div>
<div class="a " style="left:2px;top:993px;width:1916px;height:18px;background:linear-gradient(#fdfdfd,#f0f0f0 20%,#e6e6e6 80%,#ededed);border-top:1px solid #fff"></div>
<svg class="a" style="left:7px;top:997px" width="8" height="10"><path d="M6 1 L1 5 L6 9 Z" fill="#9a9a9a"/></svg>
<svg class="a" style="left:1906px;top:997px" width="8" height="10"><path d="M2 1 L7 5 L2 9 Z" fill="#9a9a9a"/></svg>
<div class="a " style="left:0px;top:1011px;width:1920px;height:29px;background:#353535;border-top:1px solid #fff"></div>
<div class="a " style="left:1px;top:1012px;width:229px;height:27px;background:#353535;border-left:1px solid #f0f0f0;border-right:1px solid #a0a0a0;border-bottom:1px solid #a0a0a0"></div>
<div class="a t" style="left:4.5px;top:1018.8px;font-size:14px;line-height:16.1px;color:#dcdcdc;transform-origin:0 0;transform:scaleX(1.0142);">Operativa EP con MES 610 Trades</div>
<div class="a " style="left:231px;top:1012px;width:153px;height:27px;background:#353535;border-left:1px solid #f0f0f0;border-right:1px solid #a0a0a0;border-bottom:1px solid #a0a0a0"></div>
<div class="a t" style="left:234px;top:1018.8px;font-size:14px;line-height:16.1px;color:#dcdcdc;transform-origin:0 0;transform:scaleX(0.9656);">F.US.EPZ20&nbsp; 5 Min&nbsp;&nbsp;&nbsp; #1</div>
<div class="a " style="left:385px;top:1012px;width:152px;height:27px;background:#353535;border-left:1px solid #f0f0f0;border-right:1px solid #a0a0a0;border-bottom:1px solid #a0a0a0"></div>
<div class="a t" style="left:388px;top:1018.8px;font-size:14px;line-height:16.1px;color:#dcdcdc;transform-origin:0 0;transform:scaleX(0.9706);">F.US.EPZ20&nbsp; 5 Min&nbsp;&nbsp;&nbsp; #2</div>
<div class="a " style="left:539px;top:1012px;width:192px;height:27px;background:#353535;border-left:1px solid #f0f0f0;border-right:1px solid #a0a0a0;border-bottom:1px solid #a0a0a0"></div>
<div class="a t" style="left:542px;top:1018.8px;font-size:14px;line-height:16.1px;color:#dcdcdc;transform-origin:0 0;transform:scaleX(0.9879);">F.US.EPZ20&nbsp; 1597 Trades&nbsp; #4</div>
<div class="a " style="left:732px;top:1012px;width:200px;height:27px;background:#353535;border-left:1px solid #f0f0f0;border-right:1px solid #a0a0a0;border-bottom:1px solid #a0a0a0"></div>
<div class="a t" style="left:735px;top:1018.8px;font-size:14px;line-height:16.1px;color:#dcdcdc;transform-origin:0 0;transform:scaleX(0.9921);">F.US.EPZ20&nbsp; 10597 Trades&nbsp; #5</div>
<div class="a " style="left:933px;top:1012px;width:184px;height:27px;background:#353535;border-left:1px solid #f0f0f0;border-right:1px solid #a0a0a0;border-bottom:1px solid #a0a0a0"></div>
<div class="a t" style="left:936px;top:1018.8px;font-size:14px;line-height:16.1px;color:#dcdcdc;transform-origin:0 0;transform:scaleX(0.9890);">F.US.EPZ20&nbsp; 610 Trades&nbsp; #6</div>
<div class="a " style="left:1118px;top:1012px;width:146px;height:27px;background:#353535;border-left:1px solid #f0f0f0;border-right:1px solid #a0a0a0;border-bottom:1px solid #a0a0a0"></div>
<div class="a t" style="left:1121px;top:1018.8px;font-size:14px;line-height:16.1px;color:#dcdcdc;transform-origin:0 0;transform:scaleX(0.9908);">F.US.EPZ20&nbsp; Daily&nbsp; #7</div>
<div class="a " style="left:1264px;top:1012px;width:200px;height:27px;background:#000;border:4px solid #700000;border-bottom-width:4px;box-shadow:inset 0 0 0 1px #3a0000"></div>
<div class="a " style="left:1264px;top:1038px;width:201px;height:1px;background:#f0f0f0"></div>
<div class="a t" style="left:1268.75px;top:1018.8px;font-size:14px;line-height:16.1px;color:#a8eca8;transform-origin:0 0;transform:scaleX(0.9857);">F.US.EPZ20&nbsp; 10597 Trades&nbsp; #3</div>
<div class="a " style="left:1464px;top:1012px;width:1px;height:27px;background:#f0f0f0"></div>
<div class="a " style="left:0px;top:1039px;width:1920px;height:41px;background:#0e1117"></div>
<svg class="a" style="left:0;top:1039px" width="1920" height="41"><defs><filter id="bl" x="-20%" y="-50%" width="140%" height="200%"><feGaussianBlur stdDeviation="4"/></filter></defs><g filter="url(#bl)" opacity="0.8"><rect x="835" y="2" width="20" height="14" fill="#5a4a40"/><rect x="900" y="3" width="62" height="24" fill="#6e6250"/><rect x="962" y="3" width="40" height="26" fill="#8a8aa8"/><rect x="1012" y="3" width="78" height="26" fill="#8a7264"/><rect x="1100" y="3" width="50" height="18" fill="#3a3e44"/><rect x="1152" y="2" width="58" height="40" fill="#a6c2e0"/><rect x="1222" y="2" width="60" height="40" fill="#7c6656"/><rect x="1282" y="2" width="40" height="20" fill="#5e564c"/><rect x="1322" y="5" width="50" height="30" fill="#3a3028"/><rect x="1480" y="10" width="80" height="14" fill="#3e3c30"/><rect x="660" y="2" width="200" height="10" fill="#1e2228"/><rect x="1380" y="8" width="60" height="10" fill="#252830"/></g></svg>
<div class="a " style="left:0px;top:1039px;width:1920px;height:2px;background:linear-gradient(#2a2d33,#5a5e66)"></div>
<svg class="a" style="left:8px;top:1041px" width="38" height="38" viewBox="0 0 38 38"><defs><linearGradient id="orbg" x1="0" y1="0" x2="0" y2="1"><stop offset="0" stop-color="#b8c8d8"/><stop offset="0.42" stop-color="#5a88b0"/><stop offset="0.5" stop-color="#1a5a98"/><stop offset="0.85" stop-color="#1a88c8"/><stop offset="1" stop-color="#30d0f0"/></linearGradient></defs><circle cx="19" cy="19.3" r="18" fill="url(#orbg)" stroke="#3a5a78" stroke-width="1"/><path d="M10.5 9.5 Q14 7.5 18.5 9.5 L17.3 17.3 Q13.5 15.5 9 17.5Z" fill="#e8501a"/><path d="M19.5 10 Q23.5 12 28.5 10.5 L26.8 18.3 Q22.5 19.5 18.3 17.5Z" fill="#7ab830"/><path d="M8.8 18.5 Q13.2 16.5 17.2 18.5 L16 26.5 Q12 24.5 7 26.5Z" fill="#30a0e8"/><path d="M18.2 18.7 Q22.5 20.5 26.6 19.2 L25 27 Q21 28.5 16.8 26.8Z" fill="#f8b818"/></svg>
<div class="a " style="left:58px;top:1045px;width:1px;height:1px;background:#6a6e78"></div>
<div class="a " style="left:61px;top:1045px;width:1px;height:1px;background:#6a6e78"></div>
<div class="a " style="left:64px;top:1045px;width:1px;height:1px;background:#6a6e78"></div>
<div class="a " style="left:58px;top:1049px;width:1px;height:1px;background:#6a6e78"></div>
<div class="a " style="left:61px;top:1049px;width:1px;height:1px;background:#6a6e78"></div>
<div class="a " style="left:64px;top:1049px;width:1px;height:1px;background:#6a6e78"></div>
<div class="a " style="left:58px;top:1053px;width:1px;height:1px;background:#6a6e78"></div>
<div class="a " style="left:61px;top:1053px;width:1px;height:1px;background:#6a6e78"></div>
<div class="a " style="left:64px;top:1053px;width:1px;height:1px;background:#6a6e78"></div>
<div class="a " style="left:58px;top:1057px;width:1px;height:1px;background:#6a6e78"></div>
<div class="a " style="left:61px;top:1057px;width:1px;height:1px;background:#6a6e78"></div>
<div class="a " style="left:64px;top:1057px;width:1px;height:1px;background:#6a6e78"></div>
<div class="a " style="left:58px;top:1061px;width:1px;height:1px;background:#6a6e78"></div>
<div class="a " style="left:61px;top:1061px;width:1px;height:1px;background:#6a6e78"></div>
<div class="a " style="left:64px;top:1061px;width:1px;height:1px;background:#6a6e78"></div>
<div class="a " style="left:58px;top:1065px;width:1px;height:1px;background:#6a6e78"></div>
<div class="a " style="left:61px;top:1065px;width:1px;height:1px;background:#6a6e78"></div>
<div class="a " style="left:64px;top:1065px;width:1px;height:1px;background:#6a6e78"></div>
<div class="a " style="left:58px;top:1069px;width:1px;height:1px;background:#6a6e78"></div>
<div class="a " style="left:61px;top:1069px;width:1px;height:1px;background:#6a6e78"></div>
<div class="a " style="left:64px;top:1069px;width:1px;height:1px;background:#6a6e78"></div>
<div class="a " style="left:58px;top:1073px;width:1px;height:1px;background:#6a6e78"></div>
<div class="a " style="left:61px;top:1073px;width:1px;height:1px;background:#6a6e78"></div>
<div class="a " style="left:64px;top:1073px;width:1px;height:1px;background:#6a6e78"></div>
<svg class="a" style="left:88px;top:1043px" width="34" height="33" viewBox="0 0 34 33"><circle cx="18.5" cy="18.5" r="11.5" fill="#4ac2f2"/><path d="M12.2 17.6 Q12.8 12.6 18.5 12.6 Q24.2 12.6 24.8 17.6Z" fill="#0b0e16"/><rect x="18.5" y="21.3" width="13" height="4.2" fill="#0b0e16"/><path d="M3 29 Q0 24 8 14 Q18 2 27 1.5 Q32 1.5 31 7 Q30.5 9 29.5 10.5 Q30 6 27 5 Q20 4.5 11 15 Q4 23.5 6.5 28.5 Q7 29.5 9 30 Q5 31 3 29Z" fill="#f0c020"/></svg>
<svg class="a" style="left:151px;top:1046px" width="32" height="30" viewBox="0 0 32 30"><path d="M1 3 H12 L14 5 H30 V28 H1Z" fill="#e8c870"/><rect x="4" y="1" width="7" height="4" fill="#3aaa3a"/><rect x="13" y="3" width="6" height="4" fill="#d03030"/><rect x="20" y="3" width="6" height="4" fill="#3a8ad0"/><path d="M1 9 H30 V28 H1Z" fill="#f8e8a8"/><path d="M5 18 H26 V28 H21 V22 H10 V28 H5Z" fill="#8ab8e0"/></svg>
<svg class="a" style="left:213px;top:1045px" width="30" height="30" viewBox="0 0 30 30"><rect x="4" y="2" width="22" height="26" fill="#5a8ab0"/><rect x="2" y="3" width="22" height="24" fill="#8ab8d8"/><circle cx="13" cy="15" r="8" fill="#f07820" stroke="#fff" stroke-width="1.5"/><path d="M10.5 10.5 L17.5 15 L10.5 19.5Z" fill="#fff"/></svg>
<svg class="a" style="left:275px;top:1044px" width="32" height="32" viewBox="0 0 32 32"><path d="M16 16 L3 8.5 A15 15 0 0 1 29 8.5 Z" fill="#db4437"/><path d="M16 16 L29 8.5 A15 15 0 0 1 16 31 Z" fill="#f4c20d"/><path d="M16 16 L16 31 A15 15 0 0 1 3 8.5 Z" fill="#0f9d58"/><circle cx="16" cy="16" r="7" fill="#fff"/><circle cx="16" cy="16" r="5.5" fill="#4285f4"/></svg>
<div class="a " style="left:324px;top:1041px;width:58px;height:38px;background:linear-gradient(160deg,#b8bcc0 0,#a4a8ac 35%,#808488 55%,#909498 100%);border:1px solid #c8ccd0;border-radius:2px;box-shadow:inset 0 0 0 1px rgba(0,0,0,0.3)"></div>
<svg class="a" style="left:337px;top:1044px" width="32" height="32" viewBox="0 0 32 32"><defs><radialGradient id="gl2" cx="0.4" cy="0.35" r="0.75"><stop offset="0" stop-color="#c0e8f8"/><stop offset="0.5" stop-color="#3a90d8"/><stop offset="1" stop-color="#0a3a90"/></radialGradient></defs><circle cx="16" cy="16" r="14.5" fill="url(#gl2)"/><path d="M9 4 Q14 2 19 3 Q22 6 20 9 Q24 10 28 9 Q31 14 29 20 Q26 25 22 29 Q19 27 20 22 Q18 18 14 18 Q11 16 12 12 Q8 10 9 4Z" fill="#90c830"/><path d="M3 13 Q6 12 7 16 Q6 20 4 21 Q2 17 3 13Z" fill="#90c830"/></svg>
<div class="a " style="left:1685px;top:1045px;width:1px;height:1px;background:#6a6e78"></div>
<div class="a " style="left:1688px;top:1045px;width:1px;height:1px;background:#6a6e78"></div>
<div class="a " style="left:1691px;top:1045px;width:1px;height:1px;background:#6a6e78"></div>
<div class="a " style="left:1685px;top:1049px;width:1px;height:1px;background:#6a6e78"></div>
<div class="a " style="left:1688px;top:1049px;width:1px;height:1px;background:#6a6e78"></div>
<div class="a " style="left:1691px;top:1049px;width:1px;height:1px;background:#6a6e78"></div>
<div class="a " style="left:1685px;top:1053px;width:1px;height:1px;background:#6a6e78"></div>
<div class="a " style="left:1688px;top:1053px;width:1px;height:1px;background:#6a6e78"></div>
<div class="a " style="left:1691px;top:1053px;width:1px;height:1px;background:#6a6e78"></div>
<div class="a " style="left:1685px;top:1057px;width:1px;height:1px;background:#6a6e78"></div>
<div class="a " style="left:1688px;top:1057px;width:1px;height:1px;background:#6a6e78"></div>
<div class="a " style="left:1691px;top:1057px;width:1px;height:1px;background:#6a6e78"></div>
<div class="a " style="left:1685px;top:1061px;width:1px;height:1px;background:#6a6e78"></div>
<div class="a " style="left:1688px;top:1061px;width:1px;height:1px;background:#6a6e78"></div>
<div class="a " style="left:1691px;top:1061px;width:1px;height:1px;background:#6a6e78"></div>
<div class="a " style="left:1685px;top:1065px;width:1px;height:1px;background:#6a6e78"></div>
<div class="a " style="left:1688px;top:1065px;width:1px;height:1px;background:#6a6e78"></div>
<div class="a " style="left:1691px;top:1065px;width:1px;height:1px;background:#6a6e78"></div>
<div class="a " style="left:1685px;top:1069px;width:1px;height:1px;background:#6a6e78"></div>
<div class="a " style="left:1688px;top:1069px;width:1px;height:1px;background:#6a6e78"></div>
<div class="a " style="left:1691px;top:1069px;width:1px;height:1px;background:#6a6e78"></div>
<div class="a " style="left:1685px;top:1073px;width:1px;height:1px;background:#6a6e78"></div>
<div class="a " style="left:1688px;top:1073px;width:1px;height:1px;background:#6a6e78"></div>
<div class="a " style="left:1691px;top:1073px;width:1px;height:1px;background:#6a6e78"></div>
<div class="a t" style="left:1703.5px;top:1051.2px;font-size:12.5px;line-height:14.4px;color:#f0f0f0;">ES</div>
<svg class="a" style="left:1732px;top:1057px" width="11" height="7"><path d="M0.5 6.5 L5.5 1 L10.5 6.5Z" fill="#f0f0f0"/></svg>
<svg class="a" style="left:1754px;top:1053px" width="18" height="17" viewBox="0 0 18 17"><path d="M1 1 V16" stroke="#eee" stroke-width="1.2"/><path d="M2 1.5 H9 L10 3 H14 V9 H9 L8 8 H2Z" fill="#f0f0f0"/><circle cx="11" cy="12" r="4.5" fill="#e02020" stroke="#fff" stroke-width="0.8"/><path d="M9 10 L13 14 M13 10 L9 14" stroke="#fff" stroke-width="1.3"/></svg>
<svg class="a" style="left:1778px;top:1053px" width="17" height="16" viewBox="0 0 17 16"><path d="M1 1 V6 H4 V1 M2.5 6 V10 H6" fill="none" stroke="#eee" stroke-width="1.2"/><rect x="6" y="3" width="10" height="8" fill="#222" stroke="#eee" stroke-width="1.2"/><path d="M11 11 V14 M7 14.5 H15" stroke="#eee" stroke-width="1.2"/></svg>
<svg class="a" style="left:1803px;top:1053px" width="15" height="16" viewBox="0 0 15 16"><path d="M1 5.5 H4 L8.5 1.5 V14.5 L4 10.5 H1Z" fill="#e8e8e8"/><path d="M11 5.5 Q12.5 8 11 10.5" fill="none" stroke="#ccc" stroke-width="1"/></svg>
<div class="a t" style="left:1838px;top:1047.7px;font-size:11.4px;line-height:13.1px;color:#f0f0f0;">04:15 p.m.</div>
<div class="a t" style="left:1835.6px;top:1064.1px;font-size:11.5px;line-height:13.2px;color:#f0f0f0;">12/09/2020</div>
<div class="a " style="left:1906px;top:1041px;width:14px;height:38px;background:linear-gradient(90deg,#3a3e46,#6a6e78 30%,#2a2e36);border:1px solid #6a707a;border-right:none"></div>
<div class="a " style="left:801px;top:173px;width:784px;height:516px;border-radius:7px;box-shadow:0 6px 22px 7px rgba(0,0,0,0.48)"></div>
<div class="a " style="left:801px;top:173px;width:784px;height:516px;border:1px solid #000;border-radius:7px 7px 6px 6px;background:linear-gradient(#9ea4aa 0,#9ea4aa 28px,#80868c 32px,#6e747a 70px,#9aa0a6 110px,#d0d4d8 142px,#d4d8dc 147px,#3a4550 148px,#36414c 100%);box-shadow:inset 0 0 0 1px #d8dce0"></div>
<div class="a " style="left:803px;top:175px;width:780px;height:27px;border-radius:5px 5px 0 0;background:linear-gradient(90deg,#3a444e 0,#36404a 440px,#2e3844 560px,#3a444e 610px,#525a62 650px,#747a82 700px,#878d93 778px)"></div>
<div class="a " style="left:803px;top:175px;width:460px;height:27px;border-radius:5px 0 0 0;background:linear-gradient(#8c9298 0,#a6acb2 7px,#b2b8be 13px,#a4aab0 20px,#7e858c 27px);-webkit-mask-image:linear-gradient(90deg,#000 0,#000 428px,transparent 458px)"></div>
<div class="a t" style="left:809px;top:181.1px;font-size:11.7px;line-height:13.5px;color:#0d1520;">Chart Settings - F.US.EPZ20&nbsp; 10597 Trades&nbsp; #3 - E-Mini S&amp;P 500: December 2020</div>
<div class="a " style="left:1531px;top:174px;width:47px;height:20px;border:1px solid #3a1a14;border-top:none;border-radius:0 0 5px 5px;background:linear-gradient(#e8a090 0,#d87060 40%,#c03018 50%,#b02810 75%,#d06040 100%);box-shadow:inset 0 0 0 1px rgba(255,220,210,0.5)"></div>
<svg class="a" style="left:1547px;top:177px" width="16" height="13" viewBox="0 0 16 13"><path d="M3 2 L13 11 M13 2 L3 11" stroke="#3a2020" stroke-width="4.5"/><path d="M3 2 L13 11 M13 2 L3 11" stroke="#fff" stroke-width="2.6"/></svg>
<div class="a " style="left:808px;top:202px;width:770px;height:480px;background:#f0f0f0;border:1px solid #20252c;box-shadow:0 0 0 1px #a4aab4,inset 0 0 0 1px #fff"></div>
<div class="a " style="left:822px;top:233px;width:743px;height:409px;border:1px solid;border-color:#fff #696969 #696969 #fff;box-shadow:inset -1px -1px 0 #a0a0a0"></div>
<div class="a " style="left:912px;top:214px;width:110px;height:19px;background:#f0f0f0;border-left:1px solid #fff;border-top:1px solid #fff;border-right:1px solid #696969;box-shadow:inset -1px 0 0 #a0a0a0"></div>
<div class="a t" style="left:916px;top:218.6px;font-size:12px;line-height:13.8px;color:#000;">Advanced Settings</div>
<div class="a " style="left:1022px;top:214px;width:122px;height:19px;background:#f0f0f0;border-left:1px solid #fff;border-top:1px solid #fff;border-right:1px solid #696969;box-shadow:inset -1px 0 0 #a0a0a0"></div>
<div class="a t" style="left:1028px;top:218.6px;font-size:12px;line-height:13.8px;color:#000;">Advanced Settings 2</div>
<div class="a " style="left:1144px;top:214px;width:122px;height:19px;background:#f0f0f0;border-left:1px solid #fff;border-top:1px solid #fff;border-right:1px solid #696969;box-shadow:inset -1px 0 0 #a0a0a0"></div>
<div class="a t" style="left:1150px;top:218.6px;font-size:12px;line-height:13.8px;color:#000;">Advanced Settings 3</div>
<div class="a " style="left:1266px;top:214px;width:42px;height:19px;background:#f0f0f0;border-left:1px solid #fff;border-top:1px solid #fff;border-right:1px solid #696969;box-shadow:inset -1px 0 0 #a0a0a0"></div>
<div class="a t" style="left:1271.5px;top:218.6px;font-size:12px;line-height:13.8px;color:#000;">Alerts</div>
<div class="a " style="left:822px;top:212px;width:90px;height:23px;background:#f0f0f0;border-left:1px solid #fff;border-top:1px solid #fff;border-right:1px solid #696969;box-shadow:inset -1px 0 0 #a0a0a0;border-top-right-radius:1px"></div>
<div class="a t" style="left:829.6px;top:217.1px;font-size:12px;line-height:13.8px;color:#000;">Main Settings</div>
<div class="a t" style="left:835.8px;top:240.1px;font-size:12px;line-height:13.8px;color:#000;">Date Range In File (yyyy-mm-dd):</div>
<div class="a t" style="left:842.5px;top:261.1px;font-size:12px;line-height:13.8px;color:#000;">From:</div>
<div class="a ed" style="left:879px;top:257px;width:81px;height:21px;background:#fff"><div style="position:absolute;left:3px;top:3px;font-size:12px;line-height:14px;color:#000">2020-08-25</div></div>
<div class="a t" style="left:980px;top:261.1px;font-size:12px;line-height:13.8px;color:#000;">To:</div>
<div class="a ed" style="left:1002px;top:257px;width:81px;height:21px;background:#f0f0f0"><div style="position:absolute;left:3px;top:3px;font-size:12px;line-height:14px;color:#000">2020-09-11</div></div>
<div class="a grp" style="left:835px;top:282px;width:269px;height:70px;"></div>
<svg class="a" style="left:839.5px;top:286.5px" width="13" height="13" viewBox="0 0 13 13"><path d="M10.7 2.3 A5.9 5.9 0 0 0 2.3 10.7" fill="none" stroke="#a0a0a0" stroke-width="1"/><path d="M9.9 3.1 A4.8 4.8 0 0 0 3.1 9.9" fill="none" stroke="#696969" stroke-width="1"/><circle cx="6.5" cy="6.5" r="4.3" fill="#fff"/><circle cx="6.5" cy="6.5" r="2" fill="#000"/></svg>
<div class="a t" style="left:857.5px;top:288.1px;font-size:12px;line-height:13.8px;color:#000;">Use Number Of Days To Load</div>
<div class="a t" style="left:845.5px;top:311.1px;font-size:12px;line-height:13.8px;color:#000;">Days To Load:</div>
<div class="a ed" style="left:926px;top:305px;width:86px;height:21px;background:#fff"><div style="position:absolute;left:3px;top:3px;font-size:12px;line-height:14px;color:#000">5000</div></div>
<div class="a btn" style="left:996px;top:307px;width:14px;height:9px;"><svg style="position:absolute;left:3px;top:2px" width="6" height="4"><path d="M0 3.5 L3 0.5 L6 3.5Z" fill="#000"/></svg></div>
<div class="a btn" style="left:996px;top:316px;width:14px;height:8px;"><svg style="position:absolute;left:3px;top:1px" width="6" height="4"><path d="M0 0.5 L3 3.5 L6 0.5Z" fill="#000"/></svg></div>
<div class="a t" style="left:1059.5px;top:295.6px;font-size:12px;line-height:13.8px;color:#000;">Market</div>
<div class="a t" style="left:1059.5px;top:311.1px;font-size:12px;line-height:13.8px;color:#000;">Depth:</div>
<div class="a ed" style="left:1059px;top:327px;width:41px;height:22px;background:#fff"><div style="position:absolute;left:3px;top:3px;font-size:12px;line-height:14px;color:#000">10</div></div>
<div class="a " style="left:839px;top:332px;width:13px;height:13px;background:#fff;border:1px solid;border-color:#a0a0a0 #fff #fff #a0a0a0;box-shadow:inset 1px 1px 0 #696969,inset -1px -1px 0 #e3e3e3"></div>
<div class="a t" style="left:857px;top:334.1px;font-size:12px;line-height:13.8px;color:#000;">Adjust Proportional With Bar Period</div>
<div class="a grp" style="left:835px;top:356px;width:269px;height:54px;"></div>
<svg class="a" style="left:839.5px;top:360.0px" width="13" height="13" viewBox="0 0 13 13"><path d="M10.7 2.3 A5.9 5.9 0 0 0 2.3 10.7" fill="none" stroke="#a0a0a0" stroke-width="1"/><path d="M9.9 3.1 A4.8 4.8 0 0 0 3.1 9.9" fill="none" stroke="#696969" stroke-width="1"/><circle cx="6.5" cy="6.5" r="4.3" fill="#fff"/></svg>
<div class="a t" style="left:857.5px;top:361.1px;font-size:12px;line-height:13.8px;color:#000;">Use Date Range</div>
<div class="a t" style="left:860.3px;top:379.1px;font-size:12px;line-height:13.8px;color:#a0a0a0;">From:</div>
<div class="a ed" style="left:895px;top:377px;width:80px;height:21px;background:#f0f0f0"><div style="position:absolute;left:3px;top:3px;font-size:12px;line-height:14px;color:#000"></div></div>
<div class="a t" style="left:984px;top:379.1px;font-size:12px;line-height:13.8px;color:#a0a0a0;">To:</div>
<div class="a ed" style="left:1003px;top:377px;width:80px;height:21px;background:#f0f0f0"><div style="position:absolute;left:3px;top:3px;font-size:12px;line-height:14px;color:#000"></div></div>
<div class="a grp" style="left:835px;top:413px;width:269px;height:84px;"></div>
<div class="a t" style="left:860.5px;top:426.1px;font-size:12px;line-height:13.8px;color:#000;">Price Display Format:</div>
<div class="a ed" style="left:979px;top:422px;width:103px;height:20px;background:#fff"><div style="position:absolute;left:3px;top:4px;font-size:12px;line-height:14px;color:#000;overflow:hidden;right:19px">0.01</div></div>
<div class="a btn" style="left:1063px;top:424px;width:17px;height:16px;"><svg style="position:absolute;left:4px;top:5px" width="9" height="5"><path d="M0 0 H8 L4 4.5Z" fill="#000"/></svg></div>
<div class="a t" style="left:924.2px;top:452.1px;font-size:12px;line-height:13.8px;color:#000;">Tick Size:</div>
<div class="a ed" style="left:979px;top:447px;width:104px;height:22px;background:#fff"><div style="position:absolute;left:3px;top:3px;font-size:12px;line-height:14px;color:#000">0.250000</div></div>
<div class="a " style="left:858px;top:474px;width:13px;height:13px;background:#fff;border:1px solid;border-color:#a0a0a0 #fff #fff #a0a0a0;box-shadow:inset 1px 1px 0 #696969,inset -1px -1px 0 #e3e3e3"></div>
<div class="a t" style="left:876px;top:474.6px;font-size:12px;line-height:13.8px;color:#000;">Auto-Set From Data Feed</div>
<div class="a t" style="left:857px;top:508.1px;font-size:12px;line-height:13.8px;color:#000;">Volume at Price Mult.:</div>
<div class="a ed" style="left:986px;top:501px;width:97px;height:22px;background:#fff"><div style="position:absolute;left:3px;top:3px;font-size:12px;line-height:14px;color:#000">1</div></div>
<div class="a t" style="left:835.2px;top:525.1px;font-size:12px;line-height:13.8px;color:#000;">Symbol:</div>
<div class="a ed" style="left:858px;top:541px;width:174px;height:22px;background:#fff"><div style="position:absolute;left:3px;top:3px;font-size:12px;line-height:14px;color:#000">F.US.EPZ20</div></div>
<div class="a btn" style="left:1045px;top:541px;width:53px;height:23px;"><div style="position:absolute;left:0;right:0;top:4px;font-size:12px;line-height:14px">Find</div></div>
<div class="a t" style="left:835.2px;top:572.1px;font-size:12px;line-height:13.8px;color:#000;">Trade and Current Quote Symbol:</div>
<div class="a ed" style="left:858px;top:588px;width:174px;height:22px;background:#fff"><div style="position:absolute;left:3px;top:3px;font-size:12px;line-height:14px;color:#000"></div></div>
<div class="a btn" style="left:1045px;top:588px;width:53px;height:23px;"><div style="position:absolute;left:0;right:0;top:4px;font-size:12px;line-height:14px">Find</div></div>
<div class="a " style="left:858px;top:617px;width:13px;height:13px;background:#fff;border:1px solid;border-color:#a0a0a0 #fff #fff #a0a0a0;box-shadow:inset 1px 1px 0 #696969,inset -1px -1px 0 #e3e3e3"></div>
<div class="a t" style="left:876.5px;top:618.1px;font-size:12px;line-height:13.8px;color:#000;">Use As Trade Only Symbol</div>
<div class="a t" style="left:1112.5px;top:240.1px;font-size:12px;line-height:13.8px;color:#000;">Chart Data Type:</div>
<div class="a ed" style="left:1112px;top:257px;width:241px;height:21px;background:#fff"><div style="position:absolute;left:3px;top:4px;font-size:12px;line-height:14px;color:#000;overflow:hidden;right:19px">Intraday Chart</div></div>
<div class="a btn" style="left:1334px;top:259px;width:17px;height:17px;"><svg style="position:absolute;left:4px;top:5px" width="9" height="5"><path d="M0 0 H8 L4 4.5Z" fill="#000"/></svg></div>
<div class="a grp" style="left:1112px;top:290px;width:241px;height:107px;"></div>
<div class="a " style="left:1119px;top:284px;width:142px;height:12px;background:#f0f0f0"></div>
<div class="a t" style="left:1121px;top:285.1px;font-size:12px;line-height:13.8px;color:#000;">Intraday Chart Bar Period:</div>
<div class="a t" style="left:1122.5px;top:302.1px;font-size:12px;line-height:13.8px;color:#000;">Bar Period Type:</div>
<div class="a ed" style="left:1119px;top:317px;width:229px;height:21px;background:#fff"><div style="position:absolute;left:3px;top:4px;font-size:12px;line-height:14px;color:#000;overflow:hidden;right:19px">Number Of Trades Per Bar</div></div>
<div class="a btn" style="left:1329px;top:319px;width:17px;height:17px;"><svg style="position:absolute;left:4px;top:5px" width="9" height="5"><path d="M0 0 H8 L4 4.5Z" fill="#000"/></svg></div>
<div class="a t" style="left:1139.7px;top:351.6px;font-size:12px;line-height:13.8px;color:#000;">Setting:</div>
<div class="a ed" style="left:1185px;top:345px;width:162px;height:21px;background:#fff"><div style="position:absolute;left:3px;top:3px;font-size:12px;line-height:14px;color:#000">10597</div></div>
<div class="a ed" style="left:1115px;top:372px;width:112px;height:22px;background:#fff"><div style="position:absolute;left:3px;top:4px;font-size:12px;line-height:14px;color:#000;overflow:hidden;right:19px">Gap Fill - None</div></div>
<div class="a btn" style="left:1208px;top:374px;width:17px;height:18px;"><svg style="position:absolute;left:4px;top:6px" width="9" height="5"><path d="M0 0 H8 L4 4.5Z" fill="#000"/></svg></div>
<div class="a ed" style="left:1236px;top:372px;width:112px;height:22px;background:#f0f0f0"><div style="position:absolute;left:3px;top:4px;font-size:12px;line-height:14px;color:#6d6d6d;overflow:hidden;right:19px">New Trend Bar Wi</div></div>
<div class="a btn" style="left:1329px;top:374px;width:17px;height:18px;"><svg style="position:absolute;left:4px;top:6px" width="9" height="5"><path d="M0 0 H8 L4 4.5Z" fill="#a0a0a0"/></svg></div>
<div class="a grp" style="left:1112px;top:405px;width:241px;height:187px;"></div>
<div class="a " style="left:1119px;top:399px;width:160px;height:12px;background:#f0f0f0"></div>
<div class="a t" style="left:1121.7px;top:400.6px;font-size:12px;line-height:13.8px;color:#000;">Session Times (HH:MM:SS):</div>
<div class="a t" style="left:1126.5px;top:422.1px;font-size:12px;line-height:13.8px;color:#000;">Start Time:</div>
<div class="a ed" style="left:1234px;top:419px;width:104px;height:22px;background:#fff"><div style="position:absolute;left:3px;top:3px;font-size:12px;line-height:14px;color:#000">09:30:00</div></div>
<div class="a t" style="left:1126.5px;top:447.6px;font-size:12px;line-height:13.8px;color:#000;">End Time:</div>
<div class="a ed" style="left:1234px;top:444px;width:104px;height:22px;background:#fff"><div style="position:absolute;left:3px;top:3px;font-size:12px;line-height:14px;color:#000">16:14:59</div></div>
<div class="a " style="left:1126px;top:471px;width:13px;height:13px;background:#fff;border:1px solid;border-color:#a0a0a0 #fff #fff #a0a0a0;box-shadow:inset 1px 1px 0 #696969,inset -1px -1px 0 #e3e3e3"><svg style="position:absolute;left:1px;top:1px" width="9" height="9"><path d="M1 3.5 L3.5 6.5 L8 1" fill="none" stroke="#000" stroke-width="2"/></svg></div>
<div class="a t" style="left:1144.5px;top:472.1px;font-size:12px;line-height:13.8px;color:#000;">Use Evening Session</div>
<div class="a t" style="left:1126.5px;top:495.1px;font-size:12px;line-height:13.8px;color:#000;">Evening Start</div>
<div class="a ed" style="left:1234px;top:489px;width:104px;height:21px;background:#fff"><div style="position:absolute;left:3px;top:3px;font-size:12px;line-height:14px;color:#000">16:15:00</div></div>
<div class="a t" style="left:1126.5px;top:520.6px;font-size:12px;line-height:13.8px;color:#000;">Evening End Time:</div>
<div class="a ed" style="left:1234px;top:514px;width:104px;height:22px;background:#fff"><div style="position:absolute;left:3px;top:3px;font-size:12px;line-height:14px;color:#000">09:29:59</div></div>
<div class="a " style="left:1126px;top:545px;width:13px;height:13px;background:#fff;border:1px solid;border-color:#a0a0a0 #fff #fff #a0a0a0;box-shadow:inset 1px 1px 0 #696969,inset -1px -1px 0 #e3e3e3"><svg style="position:absolute;left:1px;top:1px" width="9" height="9"><path d="M1 3.5 L3.5 6.5 L8 1" fill="none" stroke="#000" stroke-width="2"/></svg></div>
<div class="a t" style="left:1144.5px;top:546.6px;font-size:12px;line-height:13.8px;color:#000;">New Bar At Session Start</div>
<div class="a ed" style="left:1126px;top:561px;width:213px;height:22px;background:#fff"><div style="position:absolute;left:3px;top:4px;font-size:12px;line-height:14px;color:#000;overflow:hidden;right:19px">Load All Weekend Data</div></div>
<div class="a btn" style="left:1320px;top:563px;width:17px;height:18px;"><svg style="position:absolute;left:4px;top:6px" width="9" height="5"><path d="M0 0 H8 L4 4.5Z" fill="#000"/></svg></div>
<div class="a " style="left:1126px;top:598px;width:13px;height:13px;background:#fff;border:1px solid;border-color:#a0a0a0 #fff #fff #a0a0a0;box-shadow:inset 1px 1px 0 #696969,inset -1px -1px 0 #e3e3e3"></div>
<div class="a t" style="left:1144.5px;top:599.1px;font-size:12px;line-height:13.8px;color:#000;">Automatically Rollover Futures Symbol</div>
<div class="a " style="left:1126px;top:617px;width:13px;height:13px;background:#fff;border:1px solid;border-color:#a0a0a0 #fff #fff #a0a0a0;box-shadow:inset 1px 1px 0 #696969,inset -1px -1px 0 #e3e3e3"></div>
<div class="a t" style="left:1144.5px;top:618.1px;font-size:12px;line-height:13.8px;color:#000;">Save Days to Load, Intraday Bar Period, Graph Draw Type as Default</div>
<div class="a grp" style="left:1362px;top:249px;width:192px;height:115px;"></div>
<div class="a " style="left:1369px;top:243px;width:152px;height:12px;background:#f0f0f0"></div>
<div class="a t" style="left:1371.5px;top:244.1px;font-size:12px;line-height:13.8px;color:#000;">Historical Chart Bar Period:</div>
<svg class="a" style="left:1380.2px;top:263.5px" width="13" height="13" viewBox="0 0 13 13"><path d="M10.7 2.3 A5.9 5.9 0 0 0 2.3 10.7" fill="none" stroke="#a0a0a0" stroke-width="1"/><path d="M9.9 3.1 A4.8 4.8 0 0 0 3.1 9.9" fill="none" stroke="#696969" stroke-width="1"/><circle cx="6.5" cy="6.5" r="4.3" fill="#f0f0f0"/><circle cx="6.5" cy="6.5" r="2" fill="#a0a0a0"/></svg>
<div class="a t" style="left:1398.5px;top:265.1px;font-size:12px;line-height:13.8px;color:#a0a0a0;">Days:</div>
<div class="a ed" style="left:1453px;top:262px;width:84px;height:21px;background:#f0f0f0"><div style="position:absolute;left:3px;top:3px;font-size:12px;line-height:14px;color:#a0a0a0">1</div></div>
<svg class="a" style="left:1380.2px;top:282.5px" width="13" height="13" viewBox="0 0 13 13"><path d="M10.7 2.3 A5.9 5.9 0 0 0 2.3 10.7" fill="none" stroke="#a0a0a0" stroke-width="1"/><path d="M9.9 3.1 A4.8 4.8 0 0 0 3.1 9.9" fill="none" stroke="#696969" stroke-width="1"/><circle cx="6.5" cy="6.5" r="4.3" fill="#f0f0f0"/></svg>
<div class="a t" style="left:1398.5px;top:284.1px;font-size:12px;line-height:13.8px;color:#a0a0a0;">Weekly</div>
<svg class="a" style="left:1380.2px;top:301.5px" width="13" height="13" viewBox="0 0 13 13"><path d="M10.7 2.3 A5.9 5.9 0 0 0 2.3 10.7" fill="none" stroke="#a0a0a0" stroke-width="1"/><path d="M9.9 3.1 A4.8 4.8 0 0 0 3.1 9.9" fill="none" stroke="#696969" stroke-width="1"/><circle cx="6.5" cy="6.5" r="4.3" fill="#f0f0f0"/></svg>
<div class="a t" style="left:1398.5px;top:303.1px;font-size:12px;line-height:13.8px;color:#a0a0a0;">Monthly</div>
<svg class="a" style="left:1380.2px;top:320.3px" width="13" height="13" viewBox="0 0 13 13"><path d="M10.7 2.3 A5.9 5.9 0 0 0 2.3 10.7" fill="none" stroke="#a0a0a0" stroke-width="1"/><path d="M9.9 3.1 A4.8 4.8 0 0 0 3.1 9.9" fill="none" stroke="#696969" stroke-width="1"/><circle cx="6.5" cy="6.5" r="4.3" fill="#f0f0f0"/></svg>
<div class="a t" style="left:1398.5px;top:321.9px;font-size:12px;line-height:13.8px;color:#a0a0a0;">Quarterly</div>
<svg class="a" style="left:1380.2px;top:339.2px" width="13" height="13" viewBox="0 0 13 13"><path d="M10.7 2.3 A5.9 5.9 0 0 0 2.3 10.7" fill="none" stroke="#a0a0a0" stroke-width="1"/><path d="M9.9 3.1 A4.8 4.8 0 0 0 3.1 9.9" fill="none" stroke="#696969" stroke-width="1"/><circle cx="6.5" cy="6.5" r="4.3" fill="#f0f0f0"/></svg>
<div class="a t" style="left:1398.5px;top:340.8px;font-size:12px;line-height:13.8px;color:#a0a0a0;">Yearly</div>
<div class="a t" style="left:1362.5px;top:377.1px;font-size:12px;line-height:13.8px;color:#000;">Graph Draw Type:</div>
<div class="a ed" style="left:1362px;top:393px;width:192px;height:95px;"></div>
<div class="a t" style="left:1366px;top:398.1px;font-size:12px;line-height:13.8px;color:#000;">Candlestick Body Only</div>
<div class="a t" style="left:1366px;top:413.1px;font-size:12px;line-height:13.8px;color:#000;">Candlestick Bars Hollow</div>
<div class="a t" style="left:1366px;top:428.1px;font-size:12px;line-height:13.8px;color:#000;">Line on Close</div>
<div class="a t" style="left:1366px;top:443.1px;font-size:12px;line-height:13.8px;color:#000;">Mountain</div>
<div class="a t" style="left:1366px;top:458.1px;font-size:12px;line-height:13.8px;color:#000;">HLC Bars</div>
<div class="a " style="left:1364px;top:470px;width:172px;height:15px;background:#3399ff"></div>
<div class="a t" style="left:1366px;top:473.1px;font-size:12px;line-height:13.8px;color:#fff;">HL Bars</div>
<div class="a " style="left:1536px;top:395px;width:16px;height:91px;background:#f0f0f0"></div>
<svg class="a" style="left:1541px;top:402px" width="9" height="6"><path d="M0.5 4.5 L4.5 0.5 L8.5 4.5Z" fill="#404040"/></svg>
<svg class="a" style="left:1541px;top:476px" width="9" height="6"><path d="M0.5 0.5 L4.5 4.5 L8.5 0.5Z" fill="#404040"/></svg>
<div class="a " style="left:1537px;top:419px;width:15px;height:16px;border:1px solid #8c8c8c;border-radius:2px;background:linear-gradient(90deg,#fbfbfb 0,#f0f0f0 50%,#d4d4d4 100%)"></div>
<div class="a btn" style="left:1362px;top:496px;width:81px;height:26px;"><div style="position:absolute;left:0;right:0;top:6px;font-size:12px;line-height:14px">Scale</div></div>
<div class="a btn" style="left:1364px;top:533px;width:182px;height:26px;"><div style="position:absolute;left:0;right:0;top:6px;font-size:12px;line-height:14px">Apply Global Symbol Settings</div></div>
<div class="a btn" style="left:1364px;top:565px;width:182px;height:26px;"><div style="position:absolute;left:0;right:0;top:6px;font-size:12px;line-height:14px">Edit Global Symbol Settings</div></div>
<div class="a " style="left:821px;top:645px;width:86px;height:26px;background:#f0f0f0;border:1px solid #696969;box-shadow:inset 1px 1px 0 #fff,inset -1px -1px 0 #696969,inset -2px -2px 0 #a0a0a0"><div style="position:absolute;left:0;right:0;top:5px;font-size:12px;line-height:14px;text-align:center">OK</div></div>
<div class="a btn" style="left:914px;top:645px;width:86px;height:26px;"><div style="position:absolute;left:0;right:0;top:6px;font-size:12px;line-height:14px">Cancel</div></div>
<div class="a btn" style="left:1007px;top:645px;width:86px;height:26px;"><div style="position:absolute;left:0;right:0;top:6px;font-size:12px;line-height:14px">Apply</div></div>
<div class="a btn" style="left:1100px;top:645px;width:86px;height:26px;"><div style="position:absolute;left:0;right:0;top:6px;font-size:12px;line-height:14px">Help</div></div>
</body></html>
